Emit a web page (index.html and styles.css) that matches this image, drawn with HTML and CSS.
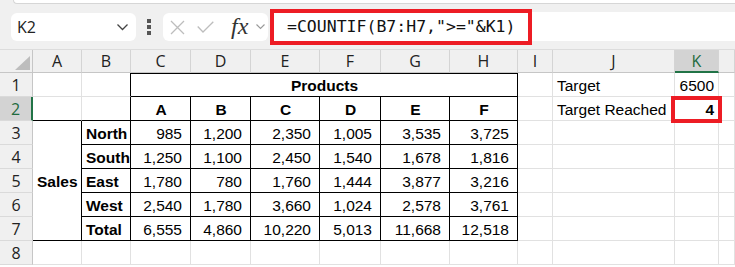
FILE: index.html
```html
<!DOCTYPE html>
<html lang="en">
<head>
    <meta charset="UTF-8">
    <title>COUNTIF Target Reached</title>
    <link rel="stylesheet" href="styles.css">
</head>
<body>
    <div class="toolbar">
        <div class="ribbon-edge"></div>
        <div class="bar">
            <div class="name-box">
                <span>K2</span>
                <svg class="chev" width="11" height="7" viewBox="0 0 11 7"><polyline points="0.5,0.5 5.5,5.5 10.5,0.5"/></svg>
            </div>
            <div class="dots"><i></i><i></i><i></i></div>
            <div class="fx-box">
                <svg class="cancel" width="15" height="15" viewBox="0 0 15 15"><path d="M1 1 L14 14 M14 1 L1 14"/></svg>
                <svg class="enter" width="17" height="12" viewBox="0 0 17 12"><polyline points="0.7,5.5 6,11 16.3,0.7"/></svg>
                <span class="fx">fx</span>
                <svg class="chev small" width="9" height="6" viewBox="0 0 9 6"><polyline points="0.5,0.5 4.5,4.5 8.5,0.5"/></svg>
            </div>
            <div class="formula">=COUNTIF(B7:H7,"&gt;="&amp;K1)<div class="highlight"></div></div>
        </div>
    </div>

    <div class="sheet">
        <!-- column headers -->
        <div class="corner"></div>
        <div class="ch">A</div>
        <div class="ch">B</div>
        <div class="ch">C</div>
        <div class="ch">D</div>
        <div class="ch">E</div>
        <div class="ch">F</div>
        <div class="ch">G</div>
        <div class="ch">H</div>
        <div class="ch">I</div>
        <div class="ch">J</div>
        <div class="ch active">K</div>
        <div class="ch"></div>

        <!-- row 1 -->
        <div class="rh">1</div>
        <div class="c"></div>
        <div class="c br"></div>
        <div class="c b ctr bt br bb products">Products</div>
        <div class="c"></div>
        <div class="c">Target</div>
        <div class="c num-k">6500</div>
        <div class="c"></div>

        <!-- row 2 -->
        <div class="rh active">2</div>
        <div class="c bb"></div>
        <div class="c br bb"></div>
        <div class="c b ctr br bb">A</div>
        <div class="c b ctr br bb">B</div>
        <div class="c b ctr br bb">C</div>
        <div class="c b ctr br bb">D</div>
        <div class="c b ctr br bb">E</div>
        <div class="c b ctr br bb">F</div>
        <div class="c"></div>
        <div class="c">Target Reached</div>
        <div class="c b num-k selected">4<div class="highlight"></div></div>
        <div class="c"></div>

        <!-- row 3 -->
        <div class="rh">3</div>
        <div class="c b br bb sales">Sales</div>
        <div class="c b br bb">North</div>
        <div class="c num br bb">985</div>
        <div class="c num br bb">1,200</div>
        <div class="c num br bb">2,350</div>
        <div class="c num br bb">1,005</div>
        <div class="c num br bb">3,535</div>
        <div class="c num br bb">3,725</div>
        <div class="c"></div>
        <div class="c"></div>
        <div class="c"></div>
        <div class="c"></div>

        <!-- row 4 -->
        <div class="rh">4</div>
        <div class="c b br bb">South</div>
        <div class="c num br bb">1,250</div>
        <div class="c num br bb">1,100</div>
        <div class="c num br bb">2,450</div>
        <div class="c num br bb">1,540</div>
        <div class="c num br bb">1,678</div>
        <div class="c num br bb">1,816</div>
        <div class="c"></div>
        <div class="c"></div>
        <div class="c"></div>
        <div class="c"></div>

        <!-- row 5 -->
        <div class="rh">5</div>
        <div class="c b br bb">East</div>
        <div class="c num br bb">1,780</div>
        <div class="c num br bb">780</div>
        <div class="c num br bb">1,760</div>
        <div class="c num br bb">1,444</div>
        <div class="c num br bb">3,877</div>
        <div class="c num br bb">3,216</div>
        <div class="c"></div>
        <div class="c"></div>
        <div class="c"></div>
        <div class="c"></div>

        <!-- row 6 -->
        <div class="rh">6</div>
        <div class="c b br bb">West</div>
        <div class="c num br bb">2,540</div>
        <div class="c num br bb">1,780</div>
        <div class="c num br bb">3,660</div>
        <div class="c num br bb">1,024</div>
        <div class="c num br bb">2,578</div>
        <div class="c num br bb">3,761</div>
        <div class="c"></div>
        <div class="c"></div>
        <div class="c"></div>
        <div class="c"></div>

        <!-- row 7 -->
        <div class="rh">7</div>
        <div class="c b br bb">Total</div>
        <div class="c num br bb">6,555</div>
        <div class="c num br bb">4,860</div>
        <div class="c num br bb">10,220</div>
        <div class="c num br bb">5,013</div>
        <div class="c num br bb">11,668</div>
        <div class="c num br bb">12,518</div>
        <div class="c"></div>
        <div class="c"></div>
        <div class="c"></div>
        <div class="c"></div>

        <!-- row 8 -->
        <div class="rh">8</div>
        <div class="c"></div>
        <div class="c"></div>
        <div class="c"></div>
        <div class="c"></div>
        <div class="c"></div>
        <div class="c"></div>
        <div class="c"></div>
        <div class="c"></div>
        <div class="c"></div>
        <div class="c"></div>
        <div class="c"></div>
        <div class="c"></div>
    </div>
</body>
</html>
```

FILE: styles.css
```css
body {
    margin: 0;
    width: 735px;
    height: 267px;
    overflow: hidden;
    background: white;
    font-family: 'Liberation Sans', Arial, sans-serif;
}

/* formula bar area */
.toolbar {
    height: 50px;
    box-sizing: border-box;
    background: #f0f0f0;
    border-bottom: 1px solid #dcdcdc;
}

.ribbon-edge {
    height: 3px;
    margin-left: 13px;
    background: white;
    border-left: 1px solid #d6d6d6;
    border-bottom: 1px solid #d6d6d6;
    border-bottom-left-radius: 6px;
}

.bar {
    display: flex;
    align-items: flex-start;
    margin-top: 9px;
    height: 28px;
}

.name-box {
    margin-left: 11px;
    width: 125px;
    height: 28px;
    box-sizing: border-box;
    padding: 0 8px 0 6px;
    background: white;
    border-radius: 6px;
    display: flex;
    align-items: center;
    justify-content: space-between;
    font-family: 'Open Sans', sans-serif;
    font-size: 16px;
    color: #222;
}

.chev polyline {
    fill: none;
    stroke: #444;
    stroke-width: 1.3;
}

.chev.small polyline {
    stroke: #999;
    stroke-width: 1.1;
}

.dots {
    margin-left: 11px;
    width: 4px;
    height: 28px;
    display: flex;
    flex-direction: column;
    justify-content: center;
    gap: 2.5px;
}

.dots i {
    width: 3.5px;
    height: 3.5px;
    background: #555;
}

.fx-box {
    margin-left: 12px;
    width: 105px;
    height: 28px;
    box-sizing: border-box;
    padding-left: 7px;
    background: white;
    border-radius: 6px;
    display: flex;
    align-items: center;
}

.cancel path,
.enter polyline {
    fill: none;
    stroke: #bdbdbd;
    stroke-width: 1.3;
}

.enter {
    margin-left: 12px;
}

.fx {
    margin-left: 17px;
    width: 25px;
    font-family: 'Liberation Serif', serif;
    font-style: italic;
    font-size: 24px;
    line-height: 28px;
    color: #333;
    margin-top: -3px;
}

.chev.small {
    margin-left: 0;
}

.formula {
    position: relative;
    flex: 1;
    margin-left: 4px;
    margin-top: -1px;
    height: 29px;
    padding-left: 15px;
    background: white;
    font-family: 'DejaVu Sans Mono', monospace;
    font-size: 16.5px;
    line-height: 29px;
    color: #111;
    white-space: nowrap;
}

.highlight {
    position: absolute;
    box-sizing: border-box;
    border: 4px solid #ed1c24;
}

.formula .highlight {
    left: -2px;
    top: -3px;
    width: 262px;
    height: 36px;
}

/* sheet grid */
.sheet {
    display: grid;
    grid-template-columns: 33px 49px 49px 60px 60px 69px 61px 69px 68px 35px 122px 44px 1fr;
    grid-template-rows: 23px repeat(8, 24px);
    font-size: 15.5px;
    color: #000;
}

.corner {
    position: relative;
    background: #f0f0f0;
    border-right: 1px solid #c6c6c6;
    border-bottom: 1px solid #c6c6c6;
}

.corner::after {
    content: '';
    position: absolute;
    left: 15px;
    top: 6px;
    width: 15px;
    height: 14px;
    background: #bdbdbd;
    clip-path: polygon(100% 0, 100% 100%, 0 100%);
}

.ch {
    display: flex;
    align-items: center;
    justify-content: center;
    background: #f0f0f0;
    border-right: 1px solid #d4d4d4;
    border-bottom: 1px solid #c6c6c6;
    font-family: 'Open Sans', sans-serif;
    font-size: 16px;
    color: #222;
}

.ch.active {
    background: #d3d3d3;
    color: #1e6b3e;
    border-bottom: 2px solid #217346;
}

.rh {
    display: flex;
    align-items: center;
    justify-content: center;
    background: #f0f0f0;
    border-right: 1px solid #c6c6c6;
    border-bottom: 1px solid #dadada;
    font-family: 'Open Sans', sans-serif;
    font-size: 16px;
    color: #222;
}

.rh.active {
    background: #d3d3d3;
    color: #1e6b3e;
    border-right: 2px solid #217346;
}

.c {
    display: flex;
    align-items: center;
    box-sizing: border-box;
    padding: 2px 3px 0 4px;
    border-right: 1px solid #e1e1e1;
    border-bottom: 1px solid #e1e1e1;
    white-space: nowrap;
    overflow: visible;
}

.b {
    font-weight: bold;
    font-size: 15.5px;
}

.ctr {
    justify-content: center;
}

.num {
    justify-content: flex-end;
    padding-right: 8px;
}

.num-k {
    justify-content: flex-end;
    padding-right: 4px;
}

.br {
    border-right-color: #000;
}

.bb {
    border-bottom-color: #000;
}

.bt {
    border-top: 1px solid #000;
}

.products {
    grid-column: span 6;
}

.sales {
    grid-row: span 5;
}

.selected {
    position: relative;
}

.selected .highlight {
    left: -4px;
    top: -1px;
    width: 51px;
    height: 27px;
}
```
